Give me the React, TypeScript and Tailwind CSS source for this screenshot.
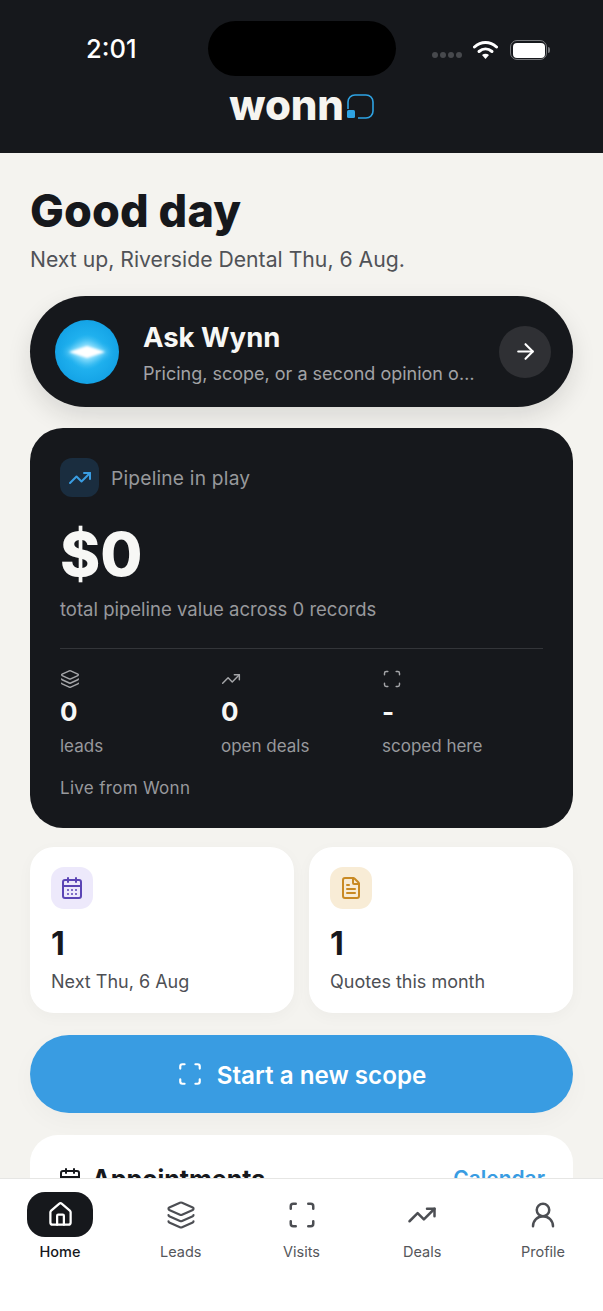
import { ArrowRight, CalendarDays, Calendar, FileText, House, Layers, Scan, TrendingUp, UserRound } from "lucide-react";

function Stat({ icon, value, label }: { icon: React.ReactNode; value: string; label: string }) {
  return (
    <div className="flex flex-col">
      <div className="h-[20px] text-[#a5a6a9] flex items-center">{icon}</div>
      <div className="mt-[7px] text-[26px] leading-[32px] font-bold text-[#f7f7f5]">{value}</div>
      <div className="mt-[6px] text-[17px] leading-[24px] text-[#98999c]">{label}</div>
    </div>
  );
}

function NavItem({ icon, label, active }: { icon: React.ReactNode; label: string; active?: boolean }) {
  return (
    <div className="flex flex-col items-center">
      <div className={`w-[66px] h-[45px] rounded-[18px] flex items-center justify-center ${active ? "bg-[#16181c] text-white" : "text-[#4c4e53]"}`}>
        {icon}
      </div>
      <div className={`mt-[5px] text-[14.5px] leading-[20px] ${active ? "text-[#16181c] font-medium" : "text-[#55575b]"}`}>{label}</div>
    </div>
  );
}

export default function App() {
  return (
    <div className="w-[603px] h-[1311px] flex flex-col overflow-hidden bg-[#f4f3ef] font-['Inter','Noto_Sans',sans-serif]">
      <header className="h-[153px] shrink-0 bg-[#16181c]">
        <div className="grid grid-cols-[208px_188px_207px] pt-[21px]">
          <div className="pl-[86px] pt-[11px] text-[25.5px] leading-[34px] font-medium text-white">2:01</div>
          <div className="h-[55px] rounded-full bg-black" />
          <div className="flex items-start pl-[36px] pt-[18px]">
            <div className="flex gap-[2px] mt-[13px]">
              <span className="w-[6px] h-[6px] rounded-full bg-[#47494d]" />
              <span className="w-[6px] h-[6px] rounded-full bg-[#47494d]" />
              <span className="w-[6px] h-[6px] rounded-full bg-[#47494d]" />
              <span className="w-[6px] h-[6px] rounded-full bg-[#47494d]" />
            </div>
            <svg className="ml-[11px] mt-[1px]" width="25" height="20" viewBox="0 0 25 20" fill="none">
              <path d="M1.5 7 C8 1 17 1 23.5 7" stroke="white" strokeWidth="3" strokeLinecap="round" />
              <path d="M6 11.5 C10 8 15 8 19 11.5" stroke="white" strokeWidth="3" strokeLinecap="round" />
              <path d="M9 15 C11 13.4 14 13.4 16 15 L12.5 19 Z" fill="white" />
            </svg>
            <div className="ml-[12px] mt-[1px] flex items-center">
              <div className="w-[37px] h-[20px] rounded-[7px] border-[1.5px] border-[#77797c] p-[1.5px]">
                <div className="w-full h-full rounded-[4px] bg-white" />
              </div>
              <div className="ml-[1px] w-[2px] h-[6px] rounded-r-full bg-[#77797c]" />
            </div>
          </div>
        </div>
        <div className="mt-[7px] flex items-end justify-center">
          <span className="text-[42px] leading-[44px] font-extrabold tracking-[-0.2px] text-[#f5f4f0]">wonn</span>
          <svg className="ml-[3px] mb-[8px]" width="27" height="25" viewBox="0 0 27 25" fill="none">
            <path d="M1 15 V8 C1 4 4 1 8 1 H19 C23 1 26 4 26 8 V17 C26 21 23 24 19 24 H11" stroke="#2ea3e3" strokeWidth="1.6" />
            <rect x="0" y="16" width="8" height="8" rx="1.5" fill="#2ea3e3" />
          </svg>
        </div>
      </header>

      <main className="flex-1 min-h-0 overflow-hidden px-[30px] pt-[34px]">
        <h1 className="text-[45px] leading-[48px] font-extrabold tracking-[0.1px] text-[#16181c]">Good day</h1>
        <p className="mt-[10px] text-[21.2px] leading-[28px] text-[#505257]">Next up, Riverside Dental Thu, 6 Aug.</p>

        <section className="mt-[23px] h-[111px] rounded-full bg-[#16181c] flex items-center pl-[25px] pr-[22px] shadow-[0_10px_24px_rgba(22,24,28,0.12)]">
          <svg className="shrink-0" width="64" height="64" viewBox="0 0 64 64">
            <defs>
              <radialGradient id="orb" cx="50%" cy="50%" r="50%">
                <stop offset="0%" stopColor="#6fd6fb" />
                <stop offset="55%" stopColor="#1fb0ee" />
                <stop offset="100%" stopColor="#14a3e6" />
              </radialGradient>
              <filter id="soft" x="-50%" y="-50%" width="200%" height="200%">
                <feGaussianBlur stdDeviation="1.2" />
              </filter>
              <filter id="glow" x="-50%" y="-50%" width="200%" height="200%">
                <feGaussianBlur stdDeviation="3" />
              </filter>
            </defs>
            <circle cx="32" cy="32" r="32" fill="url(#orb)" />
            <path d="M10 32 L32 22 L54 32 L32 42 Z" fill="#a8e8ff" filter="url(#glow)" opacity="0.8" />
            <path d="M14 32 L32 26 L50 32 L32 38 Z" fill="white" filter="url(#soft)" />
          </svg>
          <div className="ml-[24px] flex-1 min-w-0 pt-[2px]">
            <div className="text-[27.5px] leading-[34px] font-bold text-[#f7f7f5]">Ask Wynn</div>
            <div className="mt-[7px] w-[332px] text-[18px] leading-[25px] text-[#a2a3a6] truncate">Pricing, scope, or a second opinion on anything</div>
          </div>
          <div className="shrink-0 w-[52px] h-[52px] rounded-full bg-[#2f3034] flex items-center justify-center text-white">
            <ArrowRight size={25} strokeWidth={2} />
          </div>
        </section>

        <section className="mt-[21px] h-[400px] rounded-[33px] bg-[#16181c] px-[30px] pt-[30px]">
          <div className="flex items-center">
            <div className="w-[39px] h-[39px] rounded-[12px] bg-[#1a2d3f] flex items-center justify-center text-[#3a9de2]">
              <TrendingUp size={24} strokeWidth={2} />
            </div>
            <span className="ml-[12px] text-[19.2px] leading-[26px] tracking-[0.2px] text-[#97989b]">Pipeline in play</span>
          </div>
          <div className="mt-[21px] text-[61px] leading-[72px] font-extrabold text-[#f7f7f5]">$0</div>
          <div className="mt-[6px] text-[18.5px] leading-[26px] text-[#98999c]">total pipeline value across 0 records</div>
          <div className="mt-[26px] h-px bg-[#333539]" />
          <div className="mt-[20px] grid grid-cols-3">
            <Stat icon={<Layers size={20} strokeWidth={1.75} />} value="0" label="leads" />
            <Stat icon={<TrendingUp size={20} strokeWidth={1.75} />} value="0" label="open deals" />
            <Stat icon={<Scan size={20} strokeWidth={1.75} />} value="-" label="scoped here" />
          </div>
          <div className="mt-[18px] text-[17px] leading-[24px] tracking-[0.3px] text-[#98999c]">Live from Wonn</div>
        </section>

        <div className="mt-[19px] grid grid-cols-2 gap-[15px]">
          <div className="h-[166px] rounded-[24px] bg-white px-[21px] pt-[20px] shadow-[0_4px_16px_rgba(22,24,28,0.03)]">
            <div className="w-[42px] h-[42px] rounded-[13px] bg-[#ede9fb] flex items-center justify-center text-[#5b45b5]">
              <CalendarDays size={24} strokeWidth={2} />
            </div>
            <div className="mt-[15px] text-[32px] leading-[40px] font-bold text-[#16181c]">1</div>
            <div className="mt-[5px] text-[18px] leading-[26px] text-[#4d4f54]">Next Thu, 6 Aug</div>
          </div>
          <div className="h-[166px] rounded-[24px] bg-white px-[21px] pt-[20px] shadow-[0_4px_16px_rgba(22,24,28,0.03)]">
            <div className="w-[42px] h-[42px] rounded-[13px] bg-[#f8ecd6] flex items-center justify-center text-[#c98a24]">
              <FileText size={24} strokeWidth={2} />
            </div>
            <div className="mt-[15px] text-[32px] leading-[40px] font-bold text-[#16181c]">1</div>
            <div className="mt-[5px] text-[18px] leading-[26px] text-[#4d4f54]">Quotes this month</div>
          </div>
        </div>

        <div className="mt-[22px] h-[78px] rounded-full bg-[#399ce2] flex items-center justify-center text-white shadow-[0_8px_24px_rgba(22,24,28,0.03)]">
          <Scan size={26} strokeWidth={2} />
          <span className="ml-[14px] pt-[3px] text-[24.2px] leading-[32px] font-semibold">Start a new scope</span>
        </div>

        <div className="mt-[22px] h-[200px] rounded-[28px] bg-white px-[28px] pt-[28px]">
          <div className="flex items-center justify-between">
            <div className="flex items-center">
              <Calendar size={24} strokeWidth={2} className="text-[#16181c]" />
              <span className="ml-[10px] text-[25px] leading-[32px] font-bold text-[#16181c]">Appointments</span>
            </div>
            <span className="text-[21px] leading-[32px] font-semibold text-[#399ce2]">Calendar</span>
          </div>
        </div>
      </main>

      <nav className="h-[133px] shrink-0 bg-white border-t border-[#e6e6e4] px-[27px] pt-[13px] flex justify-between">
        <NavItem active icon={<House size={27} strokeWidth={2} />} label="Home" />
        <NavItem icon={<Layers size={30} strokeWidth={1.75} />} label="Leads" />
        <NavItem icon={<Scan size={30} strokeWidth={2} />} label="Visits" />
        <NavItem icon={<TrendingUp size={30} strokeWidth={2} />} label="Deals" />
        <NavItem icon={<UserRound size={30} strokeWidth={2} />} label="Profile" />
      </nav>
    </div>
  );
}
